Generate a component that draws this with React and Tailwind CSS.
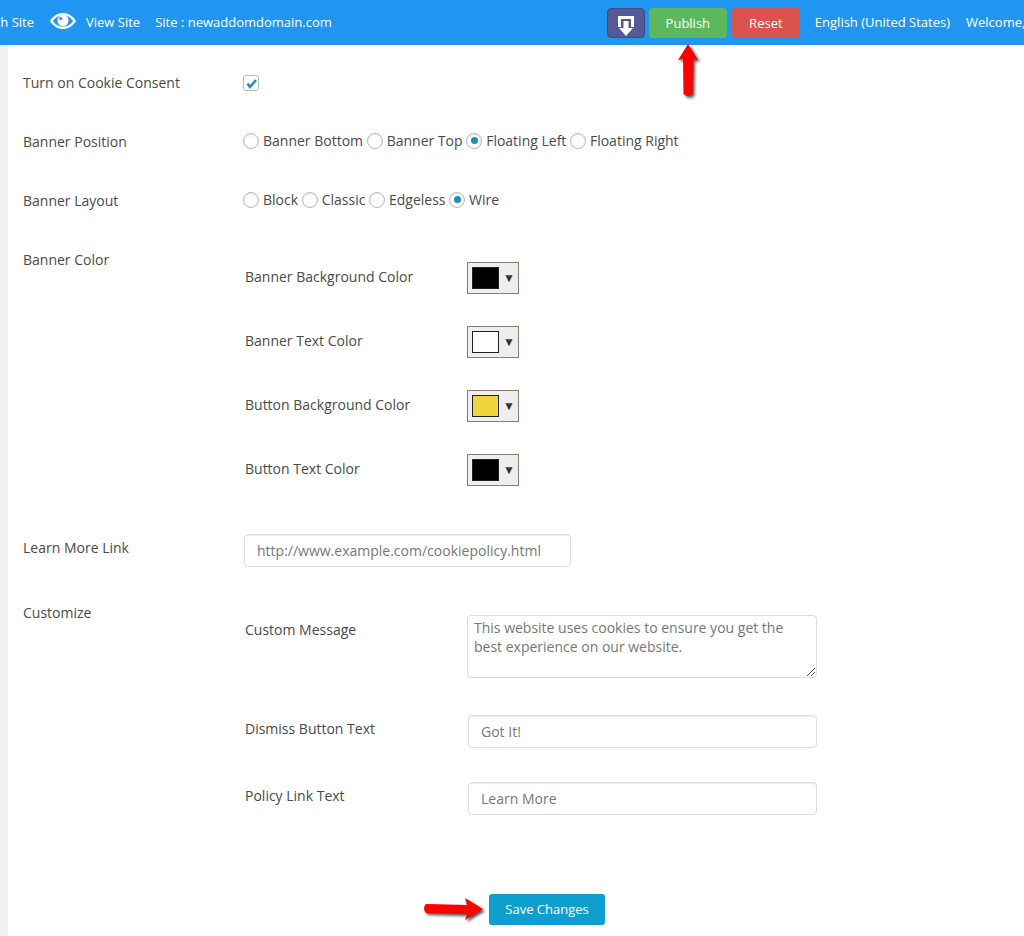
import React from "react"

const font = { fontFamily: '"Open Sans", sans-serif' }

const Radio = ({ label, checked }) => (
  <label className="flex items-center">
    <span className="flex h-4 w-4 items-center justify-center rounded-full border border-[#b4b9be] bg-white shadow-[inset_0_1px_2px_rgba(0,0,0,0.1)]">
      {checked && <span className="h-[7px] w-[7px] rounded-full bg-[#1e8cbe]" />}
    </span>
    <span className="ml-1 mr-[3.6px]">{label}</span>
  </label>
)

const Swatch = ({ label, color }) => (
  <div className="flex h-[64px] items-center">
    <div className="w-[224px] pl-[2px] pb-[2px]">{label}</div>
    <div className="flex h-8 w-[52px] items-center border border-[#8f7a66] bg-[#eeeeee] pl-[4px]">
      <span className={`h-[22px] w-[27px] border border-[#222222] ${color}`} />
      <span className="ml-[4px] text-[12px] leading-none text-[#333333]">▼</span>
    </div>
  </div>
)

const Arrow = ({ className, box, d }) => (
  <svg className={className} viewBox={box} fill="#ff0000" style={{ filter: "drop-shadow(2px 2px 1.5px rgba(0,0,0,0.7))" }}>
    <path d={d} />
  </svg>
)

const Field = ({ label, value }) => (
  <div className="flex h-[67px]">
    <div className="w-[225px] pl-[2px] pt-[4px]">{label}</div>
    <div className="flex h-[33px] w-[349px] items-center rounded border border-[#dddddd] bg-white pl-3 text-[#777777] shadow-[inset_0_1px_1px_rgba(0,0,0,0.075)]">
      {value}
    </div>
  </div>
)

export default function App() {
  return (
    <div className="relative h-[936px] w-[1024px] overflow-hidden bg-white text-sm text-[#4a4a4a]" style={font}>
      <header className="flex h-[45px] items-center overflow-hidden whitespace-nowrap bg-[#2196f0] text-[13px] text-white">
        <span className="w-[34px] pb-[1px] text-right">h Site</span>
        <svg className="-mt-[3px] ml-[16px] mr-[10px] h-[26px] w-[26px]" viewBox="0 0 26 26" fill="white">
          <path fillRule="evenodd" d="M0 13C3.5 7.5 8 5 13 5s9.500 2.500 13 8c-3.500 5.500-8 8-13 8S3.500 18.500 0 13Zm2.800 0c2.800 3.700 6 5.500 10.200 5.500S20.400 16.700 23.200 13C20.400 9.300 17.200 7.500 13 7.500S5.600 9.300 2.800 13Z" />
          <circle cx="13" cy="12.500" r="5.500" />
          <circle cx="10.800" cy="10.500" r="1.600" fill="#2196f0" />
        </svg>
        <span>View Site</span>
        <span className="ml-[15px]">Site : newaddomdomain.com</span>
        <span className="flex-1" />
        <div className="flex h-[30px] w-[38px] items-center justify-center rounded border border-[#3c4f8c] bg-[#545a94] pt-[6px]">
          <svg className="h-[22px] w-[18px]" viewBox="0 0 18 22" fill="white">
            <path d="M1 1h16v11h-3V4H4v8H1Z" />
            <path d="M6.500 6h5v7H16L9 21 2 13h4.500Z" />
          </svg>
        </div>
        <button className="ml-[4px] h-[30px] w-[78px] rounded bg-[#5cb85c] pt-[1px] text-[13px]">Publish</button>
        <button className="ml-[5px] h-[30px] w-[68px] rounded bg-[#d9534f] pt-[1px] text-[13px]">Reset</button>
        <span className="ml-[15px]">English (United States)</span>
        <span className="ml-[16px] w-[58px] shrink-0">Welcome,</span>
      </header>

      <div className="flex h-[891px]">
        <div className="w-2 bg-[#f1f1f1]" />
        <main className="flex-1 pl-[15px]">
          <div className="flex h-[67px] items-center pt-[9px]">
            <div className="w-[220px] pb-[1px]">Turn on Cookie Consent</div>
            <span className="flex h-4 w-4 items-center justify-center rounded-[3px] border border-[#b4b9be] bg-white">
              <svg className="h-3 w-3" viewBox="0 0 12 12" fill="none" stroke="#1e8cbe" strokeWidth="2.400">
                <path d="M2.500 6.500l2.500 3.500L11 3" />
              </svg>
            </span>
          </div>

          <div className="flex h-[59px] items-center">
            <div className="w-[220px] -mb-[1px]">Banner Position</div>
            <div className="-mt-[2px] flex">
              <Radio label="Banner Bottom" />
              <Radio label="Banner Top" />
              <Radio label="Floating Left" checked />
              <Radio label="Floating Right" />
            </div>
          </div>

          <div className="flex h-[59px] items-center">
            <div className="w-[220px] -mb-[1px]">Banner Layout</div>
            <div className="-mt-[2px] flex">
              <Radio label="Block" />
              <Radio label="Classic" />
              <Radio label="Edgeless" />
              <Radio label="Wire" checked />
            </div>
          </div>

          <div className="flex h-[304px] pt-[20px]">
            <div className="w-[220px]">Banner Color</div>
            <div className="-mt-[4px]">
              <Swatch label="Banner Background Color" color="bg-black" />
              <Swatch label="Banner Text Color" color="bg-white" />
              <Swatch label="Button Background Color" color="bg-[#f2d43c]" />
              <Swatch label="Button Text Color" color="bg-black" />
            </div>
          </div>

          <div className="flex h-[65px]">
            <div className="w-[221px] pt-[4px]">Learn More Link</div>
            <div className="flex h-[33px] w-[327px] items-center rounded border border-[#dddddd] pl-3 text-[#777777] shadow-[inset_0_1px_1px_rgba(0,0,0,0.075)]">
              http://www.example.com/cookiepolicy.html
            </div>
          </div>

          <div className="flex">
            <div className="w-[220px] pt-[4px]">Customize</div>
            <div className="pt-[16px]">
              <div className="flex h-[100px]">
                <div className="w-[224px] pl-[2px] pt-[5px]">Custom Message</div>
                <div className="relative h-[63px] w-[350px] rounded border border-[#dddddd] px-[6px] pt-[2px] leading-[19px] text-[#777777]">
                  This website uses cookies to ensure you get the best experience on our website.
                  <svg className="absolute bottom-[1px] right-[1px] h-2 w-2" viewBox="0 0 8 8" stroke="#555555" fill="none">
                    <path d="M0 8L8 0M4 8L8 4" />
                  </svg>
                </div>
              </div>
              <Field label="Dismiss Button Text" value="Got It!" />
              <Field label="Policy Link Text" value="Learn More" />
            </div>
          </div>
        </main>
      </div>

      <button className="absolute left-[489px] top-[894px] h-[31px] w-[116px] rounded-[3px] bg-[#0f9fcf] text-[13px] text-white">
        Save Changes
      </button>

      <Arrow
        className="absolute left-[676px] top-[42px] h-[56px] w-[24px]"
        box="0 0 24 56"
        d="M12 2L22 18L17 17L16.500 52Q12 56 7.500 52L7 17L2 18Z"
      />
      <Arrow
        className="absolute left-[420px] top-[894px] h-[30px] w-[66px]"
        box="0 0 66 30"
        d="M63 15L45 4L47 11L6 10Q2 14 6 19L47 20L45 26Z"
      />
    </div>
  )
}
